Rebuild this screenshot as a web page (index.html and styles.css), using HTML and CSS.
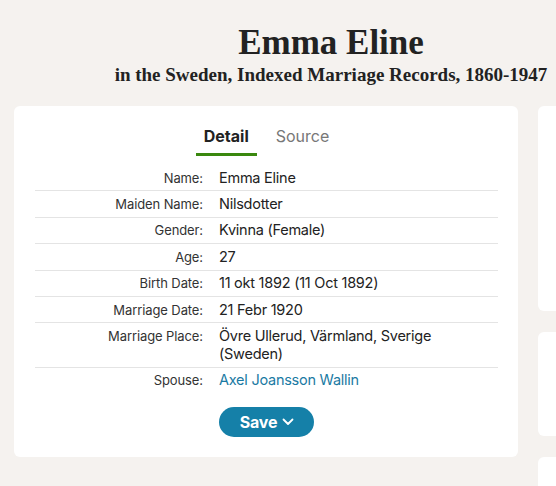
FILE: index.html
```html
<!DOCTYPE html>
<html lang="en">
  <head>
    <meta charset="UTF-8" />
    <meta name="viewport" content="width=device-width, initial-scale=1" />
    <title>Emma Eline - Sweden, Indexed Marriage Records</title>
    <link rel="stylesheet" href="styles.css">
  </head>

  <body>
    <div class="page">
      <header class="record-head">
        <h1 class="record-title">Emma Eline</h1>
        <p class="record-sub">in the Sweden, Indexed Marriage Records, 1860-1947</p>
      </header>

      <div class="layout">
        <main class="card record-card">
          <nav class="tabs">
            <a class="tab is-active" href="#">Detail</a>
            <a class="tab" href="#">Source</a>
          </nav>

          <dl class="facts">
            <div class="row">
              <dt>Name:</dt>
              <dd>Emma Eline</dd>
            </div>
            <div class="row">
              <dt>Maiden Name:</dt>
              <dd>Nilsdotter</dd>
            </div>
            <div class="row">
              <dt>Gender:</dt>
              <dd>Kvinna (Female)</dd>
            </div>
            <div class="row">
              <dt>Age:</dt>
              <dd>27</dd>
            </div>
            <div class="row">
              <dt>Birth Date:</dt>
              <dd>11 okt 1892 (11 Oct 1892)</dd>
            </div>
            <div class="row">
              <dt>Marriage Date:</dt>
              <dd>21 Febr 1920</dd>
            </div>
            <div class="row">
              <dt>Marriage Place:</dt>
              <dd>Övre Ullerud, Värmland, Sverige (Sweden)</dd>
            </div>
            <div class="row">
              <dt>Spouse:</dt>
              <dd><a href="#">Axel Joansson Wallin</a></dd>
            </div>
          </dl>

          <div class="actions">
            <button class="btn-save" type="button">
              Save
              <svg width="12" height="8" viewBox="0 0 12 8" aria-hidden="true">
                <path d="M1.5 1.5 6 6l4.5-4.5" fill="none" stroke="#fff" stroke-width="1.8" stroke-linecap="round" stroke-linejoin="round" />
              </svg>
            </button>
          </div>
        </main>

        <aside class="side">
          <div class="card side-card side-card--tall"></div>
          <div class="card side-card side-card--short"></div>
          <div class="card side-card side-card--rest"></div>
        </aside>
      </div>
    </div>
  </body>
</html>
```

FILE: styles.css
```css
body,
p,
h1,
dl,
dd {
  margin: 0;
}
html {
  overflow: hidden;
  height: 100%;
}
body {
  overflow: hidden;
  height: 100%;
  font: 14.5px/18px Inter, "Liberation Sans", sans-serif;
  letter-spacing: -0.25px;
  color: #222;
  background-color: #f5f2ef;
}

.page {
  width: 634px;
  padding: 23px 14px 0;
}

.record-head {
  text-align: center;
  margin-bottom: 19px;
  letter-spacing: 0;
}
.record-title {
  font: 700 35px/40px "Liberation Serif", serif;
  color: #222;
}
.record-sub {
  font: 700 19px/24px "Liberation Serif", serif;
  color: #222;
  white-space: nowrap;
}

.layout {
  display: flex;
  gap: 20px;
  align-items: flex-start;
}
.card {
  background-color: #fff;
  border-radius: 6px;
}

.record-card {
  flex: 0 0 504px;
  box-sizing: border-box;
  padding: 20px 20px 20px 21px;
}

.tabs {
  display: flex;
  justify-content: center;
  gap: 11px;
}
.tab {
  padding: 0 8px 7px;
  font-size: 16px;
  line-height: 20px;
  letter-spacing: 0;
  color: #777;
  text-decoration: none;
  border-bottom: 3px solid transparent;
}
.tab.is-active {
  font-weight: 700;
  color: #222;
  border-bottom-color: #3a880f;
}

.facts {
  margin-top: 9px;
}
.facts .row {
  display: grid;
  grid-template-columns: 168px 1fr;
  column-gap: 16px;
  padding: 3.7px 0;
  border-bottom: 1px solid #e4e4e4;
}
.facts .row:last-child {
  border-bottom: 0;
}
.facts dt {
  text-align: right;
  font-size: 13px;
  letter-spacing: -0.1px;
  color: #333;
}
.facts dd a {
  color: #1a7aa3;
  text-decoration: none;
}

.actions {
  display: flex;
  justify-content: center;
  margin-top: 14px;
}
.btn-save {
  display: flex;
  align-items: center;
  gap: 5px;
  height: 30px;
  padding: 0 20px 0 21px;
  font: 700 16px/1 Inter, "Liberation Sans", sans-serif;
  letter-spacing: -0.2px;
  color: #fff;
  border: 0;
  border-radius: 15px;
  background-color: #1580a8;
}

.side {
  flex: 1 0 0;
  display: flex;
  flex-direction: column;
  gap: 21px;
}
.side-card--tall {
  height: 205px;
}
.side-card--short {
  height: 104px;
}
.side-card--rest {
  height: 120px;
}
```
